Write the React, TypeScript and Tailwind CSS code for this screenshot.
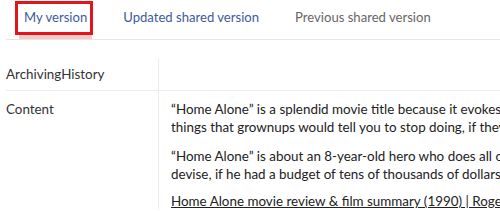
import React from "react";

export default function App() {
  return (
    <div className="relative w-[500px] h-[211px] overflow-hidden bg-white font-['Lato','Noto_Sans',sans-serif] text-[13.4px] text-[#222]">
      <div className="ml-[6px] flex h-[40px] items-center border-b border-[#e6e6e6] pb-[3px] text-[13.1px]">
        <div className="px-[18px] text-[#3b5b9c]">My version</div>
        <div className="px-[18px] text-[#3b5b9c]">Updated shared version</div>
        <div className="px-[18px] text-[#666]">Previous shared version</div>
      </div>
      <div className="absolute left-[19px] top-[35px] h-[4px] w-[73px] bg-[#f6c9c9]" />
      <div className="absolute left-[15px] top-[1px] h-[34px] w-[78px] border-[3px] border-[#e3141c]" />
      <div className="mt-[18px] ml-[6px]">
        <div className="flex border-b border-[#ececec]">
          <div className="w-[152px] shrink-0 py-[7px] leading-[18px] text-[#333]">ArchivingHistory</div>
          <div className="flex-1 border-l border-[#ececec]" />
        </div>
        <div className="flex">
          <div className="w-[152px] shrink-0 pt-[9px] leading-[18px] text-[#333]">Content</div>
          <div className="flex-1 border-l border-[#ececec] pl-[12px] pt-[9px] leading-[18px] whitespace-nowrap">
            <p>
              “Home Alone” is a splendid movie title because it evokes all the delicious fantasies
              <br />
              things that grownups would tell you to stop doing, if they were home.
            </p>
            <p className="mt-[11px]">
              “Home Alone” is about an 8-year-old hero who does all of the things we might
              <br />
              devise, if he had a budget of tens of thousands of dollars and a lot of time.
            </p>
            <p className="mt-[9px] underline">
              Home Alone movie review &amp; film summary (1990) | Roger Ebert
            </p>
          </div>
        </div>
      </div>
    </div>
  );
}
